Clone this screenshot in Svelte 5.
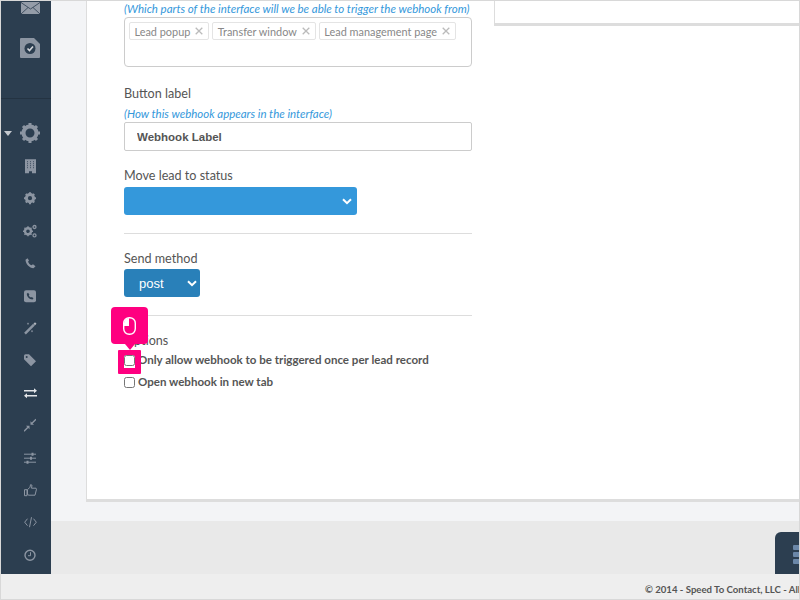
<script>
  let tags = ["Lead popup", "Transfer window", "Lead management page"];
  let options = ["Only allow webhook to be triggered once per lead record", "Open webhook in new tab"];
</script>

<div class="shell">
  <div class="upper">
    <nav class="sidebar">
      <div class="top-icons">
        <svg width="19" height="12" viewBox="0 0 19 12"><rect width="19" height="12" rx="1" fill="#949ca8"/><path d="M0 .5l9.500 6.500L19 .5M0 12l7-6.500M19 12l-7-6.500" fill="none" stroke="#2c3e50" stroke-width=".8"/></svg>
        <svg width="20" height="20" viewBox="0 0 20 20"><path d="M1 0h13l6 6v13a1 1 0 0 1-1 1H1a1 1 0 0 1-1-1V1a1 1 0 0 1 1-1z" fill="#8c95a2"/><circle cx="10" cy="10.500" r="5.500" fill="#2c3e50"/><path d="M7.500 10.500l2 2 3.500-4" fill="none" stroke="#d4d7db" stroke-width="1.600"/></svg>
      </div>
      <div class="nav-list">
        <div class="gear-row">
          <svg class="caret" width="8" height="5" viewBox="0 0 8 5"><path d="M0 0h8L4 5z" fill="#c4c8ce"/></svg>
          <svg width="20" height="20" viewBox="0 0 20 20"><circle cx="10" cy="10" r="6.500" fill="none" stroke="#8c95a2" stroke-width="4"/><path d="M10 0v20M0 10h20M3 3l14 14M17 3L3 17" stroke="#8c95a2" stroke-width="3" stroke-dasharray="3 14 3"/></svg>
        </div>
        <svg width="11" height="14" viewBox="0 0 11 14"><path d="M0 0h11v14H7v-2H4v2H0z" fill="#8c95a2"/><path d="M2.500 2v8M5.500 2v8M8.500 2v8" stroke="#2c3e50" stroke-width=".8" stroke-dasharray="1 1"/></svg>
        <svg width="12" height="12" viewBox="0 0 20 20"><circle cx="10" cy="10" r="6" fill="none" stroke="#8c95a2" stroke-width="5"/><path d="M10 0v20M0 10h20M3 3l14 14M17 3L3 17" stroke="#8c95a2" stroke-width="3.500" stroke-dasharray="3 14 3"/></svg>
        <svg width="14" height="13" viewBox="0 0 14 13"><circle cx="5" cy="6.500" r="3" fill="none" stroke="#8c95a2" stroke-width="2.400"/><path d="M5 1.500v10M0 6.500h10M1.500 3l7 7M8.500 3l-7 7" stroke="#8c95a2" stroke-width="1.400" stroke-dasharray="1.500 7 1.500"/><circle cx="11.500" cy="2.300" r="1.500" fill="none" stroke="#8c95a2" stroke-width="1.300"/><circle cx="11.500" cy="10.700" r="1.500" fill="none" stroke="#8c95a2" stroke-width="1.300"/></svg>
        <svg width="11" height="11" viewBox="0 0 11 11"><path d="M2.500 0.500L0.500 2c0 4 4 8.500 8 8.500l2-2-2.500-2-1.500 1C5 7 3.700 5.500 3 4l1-1.300z" fill="#8c95a2"/></svg>
        <svg width="12" height="12" viewBox="0 0 12 12"><rect width="12" height="12" rx="2" fill="#8c95a2"/><path d="M4 2.500L2.800 3.500c0 3 2.700 5.700 5.700 5.700l1-1.200-1.700-1.300-.8.600C6 6.800 5.200 6 4.800 5.200l.6-.8z" fill="#2c3e50"/></svg>
        <svg width="13" height="13" viewBox="0 0 13 13"><path d="M1 12L10 3" stroke="#8c95a2" stroke-width="2.400"/><path d="M11 .5l1.500 1.500-1.500 1.500L9.500 2z" fill="#b4b9c0"/><path d="M4 1v2M3 2h2M8 8.500v2M7 9.500h2" stroke="#8c95a2" stroke-width=".7"/></svg>
        <svg width="12" height="12" viewBox="0 0 12 12"><path d="M0 1.500A1.500 1.500 0 0 1 1.500 0H5l7 7-5 5-7-7z" fill="#8c95a2"/><circle cx="2.700" cy="2.700" r="1" fill="#2c3e50"/></svg>
        <svg width="13" height="10" viewBox="0 0 13 10"><path d="M0 2.500h10M13 7.500H3" stroke="#e4e6e9" stroke-width="1.500"/><path d="M10 0l3 2.500-3 2.500zM3 5L0 7.500 3 10z" fill="#e4e6e9"/></svg>
        <svg width="12" height="12" viewBox="0 0 12 12"><path d="M0 12l4-4M12 0L8 4" stroke="#8c95a2" stroke-width="1.400"/><path d="M2 6.500h3.500V10zM10 5.500H6.500V2z" fill="#8c95a2"/></svg>
        <svg width="12" height="11" viewBox="0 0 12 11"><path d="M0 1.500h12M0 5.500h12M0 9.500h12" stroke="#8c95a2" stroke-width="1"/><path d="M7.500 0h2v3h-2zM6 4h2v3H6zM2.500 8h2v3h-2z" fill="#8c95a2"/></svg>
        <svg width="13" height="12" viewBox="0 0 13 12"><path d="M.5 5.500h2.500v6H.5zM3.500 5.500L6 3 6.500.5 8 1 7.500 4H12l.5 1-1.500 6H5l-1.500-.5z" fill="none" stroke="#8c95a2" stroke-width="1"/></svg>
        <svg width="13" height="10" viewBox="0 0 13 10"><path d="M3.500 1.500L.7 5l2.800 3.500M9.500 1.500L12.300 5 9.500 8.500M7.500 0l-2 10" fill="none" stroke="#8c95a2" stroke-width="1"/></svg>
        <svg width="12" height="12" viewBox="0 0 12 12"><circle cx="6" cy="6" r="5" fill="none" stroke="#8c95a2" stroke-width="1.400"/><path d="M6.500 3v3.500H4" fill="none" stroke="#8c95a2" stroke-width="1"/></svg>
      </div>
    </nav>

    <div class="content">
      <div class="canvas">
        <main class="card">
          <div class="aside-box"></div>
          <form class="form">
            <p class="help first">(Which parts of the interface will we be able to trigger the webhook from)</p>
            <div class="tagbox">
              {#each tags as tag}
                <span class="tag">{tag}<svg width="8" height="8" viewBox="0 0 8 8"><path d="M.7.7l6.600 6.600M7.300.7L.7 7.300" stroke="#bbb" stroke-width="1.300"/></svg></span>
              {/each}
            </div>

            <label class="field-label label-button" for="button-label">Button label</label>
            <p class="help">(How this webhook appears in the interface)</p>
            <input id="button-label" class="text-input" value="Webhook Label" />

            <label class="field-label label-status" for="status">Move lead to status</label>
            <div class="select-wrap status">
              <select id="status"><option></option></select>
              <svg width="10" height="7" viewBox="0 0 10 7"><path d="M1 1.200l4 4 4-4" fill="none" stroke="#fff" stroke-width="2"/></svg>
            </div>

            <hr class="rule rule-one" />

            <label class="field-label" for="method">Send method</label>
            <div class="select-wrap method">
              <select id="method"><option>post</option></select>
              <svg width="10" height="7" viewBox="0 0 10 7"><path d="M1 1.200l4 4 4-4" fill="none" stroke="#fff" stroke-width="2"/></svg>
            </div>

            <hr class="rule rule-two" />

            <div class="field-label">Options</div>
            <div class="options">
              {#each options as option}
                <label class="check"><input type="checkbox" />{option}</label>
              {/each}
            </div>
          </form>
        </main>
      </div>
      <div class="band">
        <div class="widget">
          <span></span><span></span><span></span>
        </div>
      </div>
    </div>
  </div>
  <footer class="footer">© 2014 - Speed To Contact, LLC - All Rights Reserved</footer>

  <div class="pulse"></div>
  <div class="pointer">
    <svg width="13" height="18" viewBox="0 0 13 18"><rect x=".7" y=".7" width="11.600" height="16.600" rx="5.500" fill="none" stroke="#fff" stroke-width="1.400"/><path d="M6 1a5.500 5.500 0 0 0-5 5.500V9h5z" fill="#fff"/></svg>
  </div>
  <div class="pointer-arrow"></div>
</div>

<style>
  :global(body) {
    margin: 0;
    overflow: hidden;
    font-family: Lato, "Noto Sans", sans-serif;
    color: #555;
  }

  p {
    margin: 0;
  }

  .shell {
    position: relative;
    display: flex;
    flex-direction: column;
    box-sizing: border-box;
    width: 800px;
    height: 600px;
    overflow: hidden;
    border: 1px solid #d8d8d8;
    border-bottom: 0;
  }

  .upper {
    display: flex;
    height: 573px;
  }

  .sidebar {
    flex: 0 0 50px;
    background: #2c3e50;
  }

  .top-icons {
    box-sizing: border-box;
    height: 98px;
    border-bottom: 1px solid #243342;
    display: flex;
    flex-direction: column;
    align-items: center;
    gap: 24px;
    padding: 1px 0 0 8px;
  }

  .nav-list {
    display: flex;
    flex-direction: column;
    padding: 24px 0 0 8px;
    align-items: center;
  }

  .nav-list > svg,
  .gear-row {
    flex: none;
  }

  .nav-list > svg {
    height: 32.400px;
  }

  .gear-row {
    position: relative;
    height: 20px;
    margin-bottom: 7px;
  }

  .caret {
    position: absolute;
    left: -16px;
    top: 8px;
  }

  .content {
    flex: 1;
    display: flex;
    flex-direction: column;
    min-width: 0;
  }

  .canvas {
    box-sizing: border-box;
    height: 520px;
    background: #f3f4f6;
    padding-left: 35px;
  }

  .card {
    position: relative;
    box-sizing: border-box;
    height: 501px;
    background: #fff;
    border-left: 1px solid #ddd;
    border-bottom: 3px solid #ddd;
  }

  .aside-box {
    position: absolute;
    left: 407px;
    right: 0;
    top: -1px;
    height: 26px;
    box-sizing: border-box;
    border-left: 1px solid #ddd;
    border-bottom: 3px solid #ddd;
  }

  .form {
    box-sizing: border-box;
    width: 385px;
    padding: 1px 0 0 37px;
    display: flex;
    flex-direction: column;
    align-items: flex-start;
  }

  .help {
    font-size: 11.470px;
    line-height: 14px;
    font-style: italic;
    color: #3498db;
    white-space: nowrap;
  }

  .tagbox {
    box-sizing: border-box;
    width: 348px;
    height: 50px;
    margin-top: 1px;
    padding: 4px;
    display: flex;
    align-items: flex-start;
    gap: 3px;
    border: 1px solid #ccc;
    border-radius: 4px;
  }

  .tag {
    height: 16px;
    padding: 0 5px 0 4.500px;
    display: flex;
    align-items: center;
    gap: 5px;
    font-size: 10.900px;
    color: #888;
    white-space: nowrap;
    border: 1px solid #e4e4e4;
    border-radius: 2px;
  }

  .field-label {
    font-size: 12.600px;
    line-height: 16px;
    color: #555;
  }

  .label-button {
    margin-top: 19px;
    margin-bottom: 5px;
  }

  .text-input {
    box-sizing: border-box;
    width: 348px;
    height: 29px;
    margin-top: 1px;
    padding: 0 12px;
    border: 1px solid #ccc;
    border-radius: 2px;
    outline: 0;
    font: 700 11.500px "Liberation Sans", sans-serif;
    color: #555;
  }

  .label-status {
    margin-top: 17px;
    margin-bottom: 3px;
  }

  .select-wrap {
    position: relative;
    height: 28px;
  }

  .select-wrap select {
    appearance: none;
    display: block;
    width: 100%;
    height: 100%;
    border: 0;
    border-radius: 3px;
    padding: 0 15px;
    color: #fff;
    font: 13px "Liberation Sans", sans-serif;
    outline: 0;
  }

  .select-wrap svg {
    position: absolute;
    right: 3px;
    top: 11px;
  }

  .status {
    width: 233px;
  }

  .status svg {
    right: 5px;
  }

  .status select {
    background: #3498db;
  }

  .method {
    width: 76px;
    margin-top: 2px;
  }

  .method select {
    background: #2980b9;
  }

  .rule {
    align-self: stretch;
    width: 348px;
    height: 1px;
    margin: 0;
    border: 0;
    background: #ddd;
  }

  .rule-one {
    margin: 18px 0 17px;
  }

  .rule-two {
    margin: 18px 0 17px;
  }

  .options {
    margin-top: 2px;
    display: flex;
    flex-direction: column;
    gap: 6px;
  }

  .check {
    display: flex;
    align-items: center;
    gap: 3px;
    height: 16px;
    font-size: 11.550px;
    font-weight: 700;
    color: #555;
    white-space: nowrap;
  }

  .check input {
    position: relative;
    z-index: 1;
    width: 11px;
    height: 11px;
    margin: 2px 0 0;
  }

  .band {
    position: relative;
    flex: 1;
    background: #e9e9e9;
  }

  .widget {
    position: absolute;
    left: 724px;
    top: 11px;
    bottom: 0;
    width: 40px;
    box-sizing: border-box;
    padding: 13px 0 0 18px;
    background: #2c3e50;
    border-top-left-radius: 6px;
  }

  .widget span {
    display: block;
    width: 10px;
    height: 5px;
    margin-bottom: 2px;
    border-radius: 1px;
    background: #6b87a8;
  }

  .footer {
    flex: 1;
    padding: 9px 0 0 644px;
    background: #eee;
    border-bottom: 1px solid #d8d8d8;
    font-size: 9.600px;
    line-height: 13px;
    font-weight: 700;
    color: #555;
    white-space: nowrap;
  }

  .pulse {
    position: absolute;
    left: 117px;
    top: 349px;
    width: 23px;
    height: 24px;
    box-sizing: border-box;
    border: 6px solid #ff0080;
    border-radius: 1px;
  }

  .pointer {
    position: absolute;
    left: 110px;
    top: 306px;
    width: 37px;
    height: 37px;
    display: flex;
    align-items: center;
    justify-content: center;
    background: #ff0080;
    border-radius: 4px;
  }

  .pointer-arrow {
    position: absolute;
    left: 124px;
    top: 343px;
    width: 0;
    height: 0;
    border: 5px solid transparent;
    border-top: 6px solid #ff0080;
    border-bottom: 0;
  }
</style>
